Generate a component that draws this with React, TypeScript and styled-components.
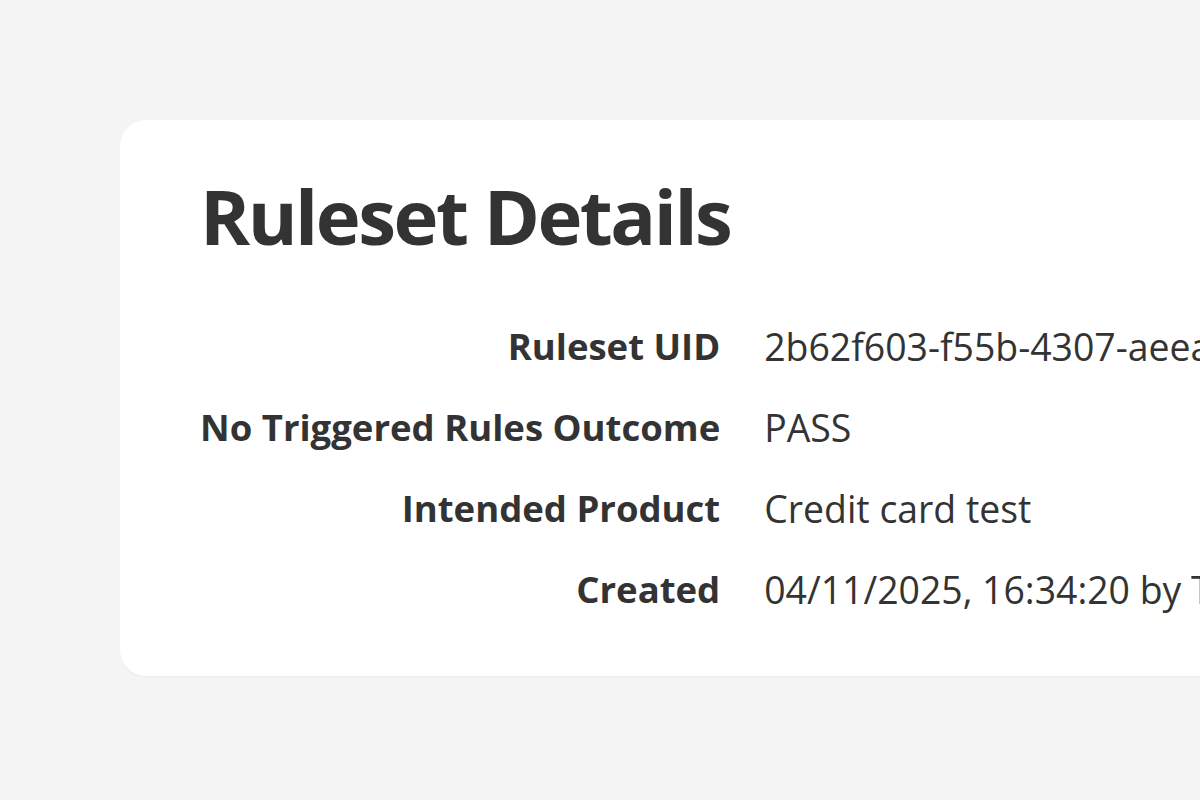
import React from "react";
import styled, { createGlobalStyle } from "styled-components";

const Global = createGlobalStyle`
  html, body { margin: 0; padding: 0; background: #f4f4f4; overflow: hidden; }
  body { font-family: "Open Sans", "Noto Sans", sans-serif; color: #333333; }
`;

const Page = styled.div`
  width: 1200px;
  height: 800px;
  padding-top: 120px;
  padding-left: 120px;
  box-sizing: border-box;
  overflow: hidden;
`;

const Card = styled.section`
  width: 1400px;
  background: #ffffff;
  border-radius: 26px;
  padding: 50px 0 61px 80px;
  box-sizing: border-box;
  box-shadow: 0 1px 2px rgba(0, 0, 0, 0.04);
`;

const Title = styled.h1`
  margin: 0 0 60px 0;
  font-size: 76px;
  font-weight: 700;
  line-height: 1.2;
  letter-spacing: -2.5px;
`;

const Details = styled.dl`
  display: grid;
  grid-template-columns: max-content 1fr;
  column-gap: 44px;
  row-gap: 30px;
  margin: 0;
`;

const Label = styled.dt`
  font-size: 36.5px;
  font-weight: 700;
  text-align: right;
  line-height: 51px;
  white-space: nowrap;
`;

const Value = styled.dd`
  margin: 0;
  font-size: 37.4px;
  font-weight: 400;
  line-height: 51px;
  white-space: nowrap;
`;

const rows: [string, string][] = [
  ["Ruleset UID", "2b62f603-f55b-4307-aeea-8c1d2e4f7a90"],
  ["No Triggered Rules Outcome", "PASS"],
  ["Intended Product", "Credit card test"],
  ["Created", "04/11/2025, 16:34:20 by Test User"],
];

export default function App() {
  return (
    <>
      <Global />
      <Page>
        <Card>
          <Title>Ruleset Details</Title>
          <Details>
            {rows.map(([k, v]) => (
              <React.Fragment key={k}>
                <Label>{k}</Label>
                <Value>{v}</Value>
              </React.Fragment>
            ))}
          </Details>
        </Card>
      </Page>
    </>
  );
}
